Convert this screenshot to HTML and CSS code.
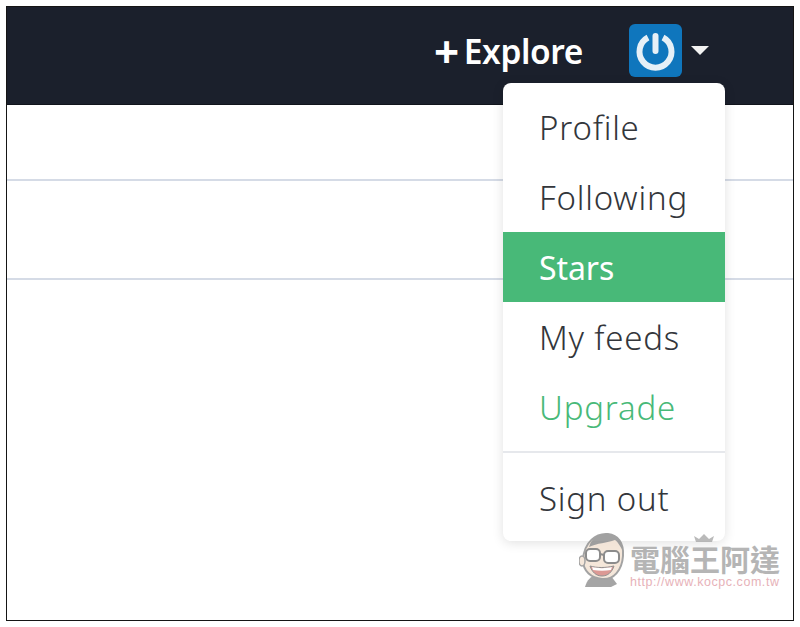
FILE: index.html
```html
<!DOCTYPE html>
<html lang="en">
<head>
  <meta charset="UTF-8" />
  <title>Feedly menu</title>
  <link rel="stylesheet" href="styles.css">
</head>
<body>
  <div class="frame">
    <header class="navbar">
      <a class="explore"><span class="plus">+</span>Explore</a>
      <div class="avatar">
        <svg width="53" height="53" viewBox="0 0 53 53">
          <rect width="53" height="53" rx="6" fill="#0f76bd"/>
          <path d="M19 13.5a16 16 0 1 0 15 0" fill="none" stroke="#e6f0f7" stroke-width="6"/>
          <path d="M26.5 12v15" fill="none" stroke="#e6f0f7" stroke-width="6" stroke-linecap="round"/>
        </svg>
      </div>
      <span class="caret"></span>
    </header>
    <div class="row row-first"></div>
    <div class="row row-second"></div>

    <nav class="dropdown">
      <a class="item">Profile</a>
      <a class="item">Following</a>
      <a class="item active">Stars</a>
      <a class="item">My feeds</a>
      <a class="item upgrade">Upgrade</a>
      <div class="divider"></div>
      <a class="item">Sign out</a>
    </nav>

    <div class="watermark">
      <svg class="mascot" width="50" height="58" viewBox="0 0 50 58">
        <path d="M6 57c2-7 6-11 12-13l14 2 6 8-6 3z" fill="#8f8f8f"/>
        <path d="M4 30C5 12 17 3 29 4c10 1 16 9 15 22-1 14-9 24-21 23C12 48 4 41 4 30z" fill="#f3e2d2" stroke="#8d8d8d" stroke-width="2"/>
        <path d="M10 17C13 7 21 3 29 4c10 1 15 8 15 17-3-5-5-9-8-11-8 3-18 3-26 7z" fill="#8a8a8a"/>
        <ellipse cx="3" cy="31" rx="3" ry="5" fill="#f3e2d2" stroke="#8d8d8d" stroke-width="1.5"/>
        <rect x="7" y="19" width="14" height="12" rx="4" fill="#fff" stroke="#707070" stroke-width="2"/>
        <rect x="25" y="21" width="15" height="12" rx="4" fill="#fff" stroke="#707070" stroke-width="2"/>
        <path d="M21 24l4 1" fill="none" stroke="#707070" stroke-width="2"/>
        <path d="M11 36c7 2 15 2 24 0-2 6-6 10-12 10-6 0-10-4-12-10z" fill="#d4807a" stroke="#777"/>
        <path d="M13 37c6 1.5 14 1.5 20 0l-1 3c-6 1-12 1-18 0z" fill="#fff"/>
      </svg>
      <div class="mark-text">
        <svg class="crown" width="22" height="9" viewBox="0 0 22 9">
          <path d="M3 8L1 2l5 3 5-5 5 5 5-3-2 6z" fill="#a9a9a9"/>
        </svg>
        <div class="mark-name">電腦王阿達</div>
        <div class="mark-url">http://www.kocpc.com.tw</div>
      </div>
    </div>
  </div>
</body>
</html>
```

FILE: styles.css
```css
body {
  margin: 0;
  background: white;
  font-family: "Noto Sans", "Open Sans", sans-serif;
}

.frame {
  position: relative;
  width: 786px;
  height: 613px;
  margin: 6px;
  border: 1px solid #151515;
  background: white;
  overflow: hidden;
}

.navbar {
  display: flex;
  align-items: center;
  justify-content: flex-end;
  height: 87px;
  padding-right: 84px;
  padding-bottom: 10px;
  background-color: #1b202c;
  color: white;
  border-bottom: 1px solid #11141c;
}

.explore {
  display: flex;
  align-items: center;
  font-size: 33.5px;
  font-weight: 600;
  letter-spacing: -0.4px;
  margin-right: 46px;
}

.plus {
  font-size: 44px;
  font-weight: 700;
  margin-right: 5px;
  line-height: 1;
}

.avatar {
  display: flex;
  height: 53px;
}

.caret {
  width: 0;
  height: 0;
  margin-left: 9px;
  border-left: 9px solid transparent;
  border-right: 9px solid transparent;
  border-top: 9px solid #f2f2f2;
}

.row {
  border-bottom: 2px solid #d5dbe6;
}

.row-first {
  height: 74px;
}

.row-second {
  height: 97px;
}

.dropdown {
  position: absolute;
  left: 496px;
  top: 76px;
  width: 222px;
  height: 458px;
  box-sizing: border-box;
  padding-top: 9px;
  background: white;
  border-radius: 8px;
  box-shadow: 0 2px 12px rgba(0, 0, 0, 0.12);
}

.item {
  display: flex;
  align-items: center;
  height: 70px;
  padding-left: 36px;
  box-sizing: border-box;
  font-size: 33px;
  font-weight: 300;
  letter-spacing: 0.8px;
  color: #33363b;
}

.item.active {
  background: #48b978;
  color: white;
  font-weight: 400;
  font-size: 32px;
  letter-spacing: -0.1px;
}

.item.upgrade {
  color: #48b978;
}

.divider {
  height: 2px;
  margin-top: 9px;
  margin-bottom: 10px;
  background: #e6e8ec;
}

.watermark {
  position: absolute;
  left: 572px;
  top: 523px;
  display: flex;
  gap: 1px;
  opacity: 0.8;
}

.mark-text {
  position: relative;
  display: flex;
  flex-direction: column;
  margin-top: 12px;
}

.crown {
  position: absolute;
  left: 63px;
  top: -8px;
}

.mark-name {
  font-family: "Noto Sans CJK TC", sans-serif;
  font-size: 30px;
  font-weight: 700;
  line-height: 33px;
  color: #a3a3a3;
}

.mark-url {
  font-family: "Liberation Sans", sans-serif;
  font-size: 12.5px;
  line-height: 14px;
  letter-spacing: 0.55px;
  color: #e2a0a8;
}
```
